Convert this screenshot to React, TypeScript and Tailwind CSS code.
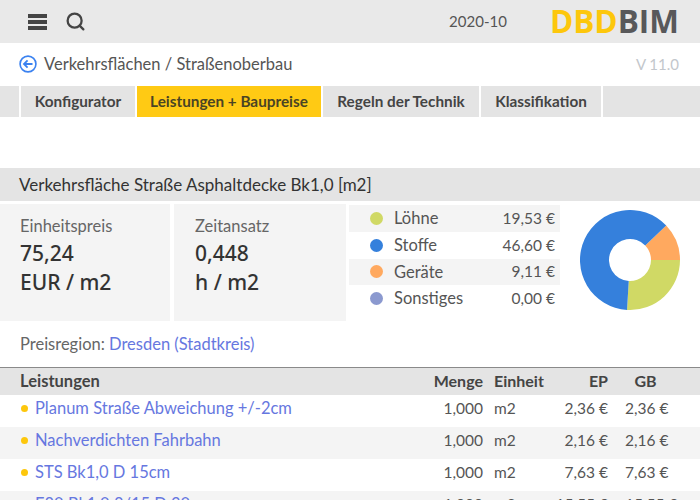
import { Search } from "lucide-react";

const tabs = [
  { label: "Konfigurator", width: "w-[114px]" },
  { label: "Leistungen + Baupreise", width: "w-[184px]", active: true },
  { label: "Regeln der Technik", width: "w-[156px]" },
  { label: "Klassifikation", width: "w-[120px]" },
];

const legend = [
  { label: "Löhne", value: "19,53 €", dot: "bg-[#d0d965]", shaded: true },
  { label: "Stoffe", value: "46,60 €", dot: "bg-[#3580dc]" },
  { label: "Geräte", value: "9,11 €", dot: "bg-[#ffa95f]", shaded: true },
  { label: "Sonstiges", value: "0,00 €", dot: "bg-[#8b99cf]" },
];

const rows = [
  { name: "Planum Straße Abweichung +/-2cm", ep: "2,36 €", gb: "2,36 €" },
  { name: "Nachverdichten Fahrbahn", ep: "2,16 €", gb: "2,16 €", shaded: true },
  { name: "STS Bk1,0 D 15cm", ep: "7,63 €", gb: "7,63 €" },
  { name: "E80 Bk1,0 8/15 D 30", ep: "15,55 €", gb: "15,55 €", shaded: true },
];

function Donut() {
  const seg = (from: number, to: number) => {
    const pt = (a: number, r: number) => {
      const t = ((a - 90) * Math.PI) / 180;
      return `${(50 + r * Math.cos(t)).toFixed(2)} ${(50 + r * Math.sin(t)).toFixed(2)}`;
    };
    const large = to - from > 180 ? 1 : 0;
    return `M${pt(from, 50)} A50 50 0 ${large} 1 ${pt(to, 50)} L${pt(to, 21)} A21 21 0 ${large} 0 ${pt(from, 21)} Z`;
  };
  return (
    <svg viewBox="0 0 100 100" className="w-[100px] h-[100px]">
      <path d={seg(46.4, 90)} fill="#ffa95f" />
      <path d={seg(90, 183.4)} fill="#d0d965" />
      <path d={seg(183.4, 406.4)} fill="#3580dc" />
    </svg>
  );
}

function Logo() {
  return (
    <div className="text-[31.5px] leading-none font-bold mt-[-2px] font-['Open_Sans',sans-serif]">
      <span className="text-[#fdc70c]">DBD</span>
      <span className="text-[#58585a]">BIM</span>
    </div>
  );
}

export default function App() {
  return (
    <div className="h-[500px] w-[700px] overflow-hidden bg-white text-[#4a4a4a] font-['Lato',sans-serif]">
      <header className="h-[43px] bg-[#e9e9e9] flex items-center pl-[28px] pr-[21px]">
        <svg viewBox="0 0 19 16" className="w-[19px] h-[16px] text-[#444]" fill="currentColor">
          <rect width="19" height="4" />
          <rect y="6" width="19" height="4" />
          <rect y="12" width="19" height="4" />
        </svg>
        <Search className="w-[21px] h-[21px] text-[#444] ml-[18px] mb-[1px]" strokeWidth={2.6} />
        <span className="ml-auto mr-[43px] text-[15px] text-[#555]">2020-10</span>
        <Logo />
      </header>

      <div className="h-[43px] flex items-center pl-[19px] pr-[21px]">
        <svg viewBox="0 0 20 20" className="w-[18px] h-[18px] mr-[7px] text-[#3b82f0] mt-[-2px]" fill="none" stroke="currentColor" strokeWidth="1.8">
          <circle cx="10" cy="10" r="8.8" />
          <path d="M15 10H6M9.5 6 5.5 10l4 4" strokeWidth="2" />
        </svg>
        <span className="text-[16.5px] text-[#555]">Verkehrsflächen / Straßenoberbau</span>
        <span className="ml-auto text-[15px] text-[#c3c7cc]">V 11.0</span>
      </div>

      <nav className="h-[31px] flex gap-[2px]">
        <div className="w-[19px] bg-[#e4e4e4]" />
        {tabs.map((t) => (
          <div
            key={t.label}
            className={`${t.width} flex items-center justify-center text-[15.3px] font-bold ${
              t.active ? "bg-[#ffca14] text-[#4a4424]" : "bg-[#e4e4e4] text-[#444]"
            }`}
          >
            {t.label}
          </div>
        ))}
        <div className="flex-1 bg-[#e4e4e4]" />
      </nav>

      <div className="mt-[51px] h-[33px] bg-[#e4e4e4] flex items-center pl-[19px] text-[17px] text-[#333]">
        Verkehrsfläche Straße Asphaltdecke Bk1,0 [m2]
      </div>

      <section className="mt-[3px] h-[117px] flex">
        <div className="w-[170px] bg-[#f4f4f4] pl-[20px] pt-[11px]">
          <div className="text-[16.5px] text-[#666] leading-[22px]">Einheitspreis</div>
          <div className="text-[21px] leading-[29px] mt-[2px] font-medium text-[#333] font-['Noto_Sans',sans-serif]">75,24</div>
          <div className="text-[21px] leading-[29px] font-medium text-[#333] font-['Noto_Sans',sans-serif]">EUR / m2</div>
        </div>
        <div className="w-[172px] ml-[4px] bg-[#f4f4f4] pl-[21px] pt-[11px]">
          <div className="text-[16.5px] text-[#666] leading-[22px]">Zeitansatz</div>
          <div className="text-[21px] leading-[29px] mt-[2px] font-medium text-[#333] font-['Noto_Sans',sans-serif]">0,448</div>
          <div className="text-[21px] leading-[29px] font-medium text-[#333] font-['Noto_Sans',sans-serif]">h / m2</div>
        </div>
        <div className="w-[211px] ml-[3px] pt-[1px]">
          {legend.map((l) => (
            <div
              key={l.label}
              className={`h-[26.75px] flex items-center pl-[21px] pr-[5px] text-[16.5px] text-[#555] ${l.shaded ? "bg-[#f4f4f4]" : ""}`}
            >
              <span className={`w-[13px] h-[13px] rounded-full ${l.dot}`} />
              <span className="ml-[11px]">{l.label}</span>
              <span className="ml-auto text-[15.5px]">{l.value}</span>
            </div>
          ))}
        </div>
        <div className="ml-[20px] mt-[6px]">
          <Donut />
        </div>
      </section>

      <div className="h-[46px] pt-[1px] flex items-center pl-[20px] text-[16.5px] text-[#666]">
        Preisregion:&nbsp;<span className="text-[#6677e0]">Dresden (Stadtkreis)</span>
      </div>

      <div className="border-t border-[#8a8a8a]">
        <div className="h-[27px] pb-[1px] bg-[#e4e4e4] grid grid-cols-[373px_110px_11px_1fr_17px_41px_34px] items-center text-[16px] font-bold text-[#444]">
          <span className="pl-[20px] text-[16.5px]">Leistungen</span>
          <span className="text-right">Menge</span>
          <span />
          <span className="flex justify-between">
            <span>Einheit</span>
            <span>EP</span>
          </span>
          <span />
          <span className="text-center">GB</span>
          <span />
        </div>
        {rows.map((r) => (
          <div
            key={r.name}
            className={`h-[32px] pb-[5px] grid grid-cols-[373px_110px_11px_1fr_17px_41px_34px] items-center text-[15.5px] text-[#555] ${r.shaded ? "bg-[#f4f4f4]" : ""}`}
          >
            <span className="pl-[21px] flex items-center text-[16.5px] text-[#6677e0]">
              <span className="w-[7px] h-[7px] rounded-full bg-[#fdc70c] mr-[7px]" />
              {r.name}
            </span>
            <span className="text-right">1,000</span>
            <span />
            <span className="flex justify-between">
              <span>m2</span>
              <span>{r.ep}</span>
            </span>
            <span />
            <span className="text-center whitespace-nowrap">{r.gb}</span>
            <span />
          </div>
        ))}
      </div>
    </div>
  );
}
